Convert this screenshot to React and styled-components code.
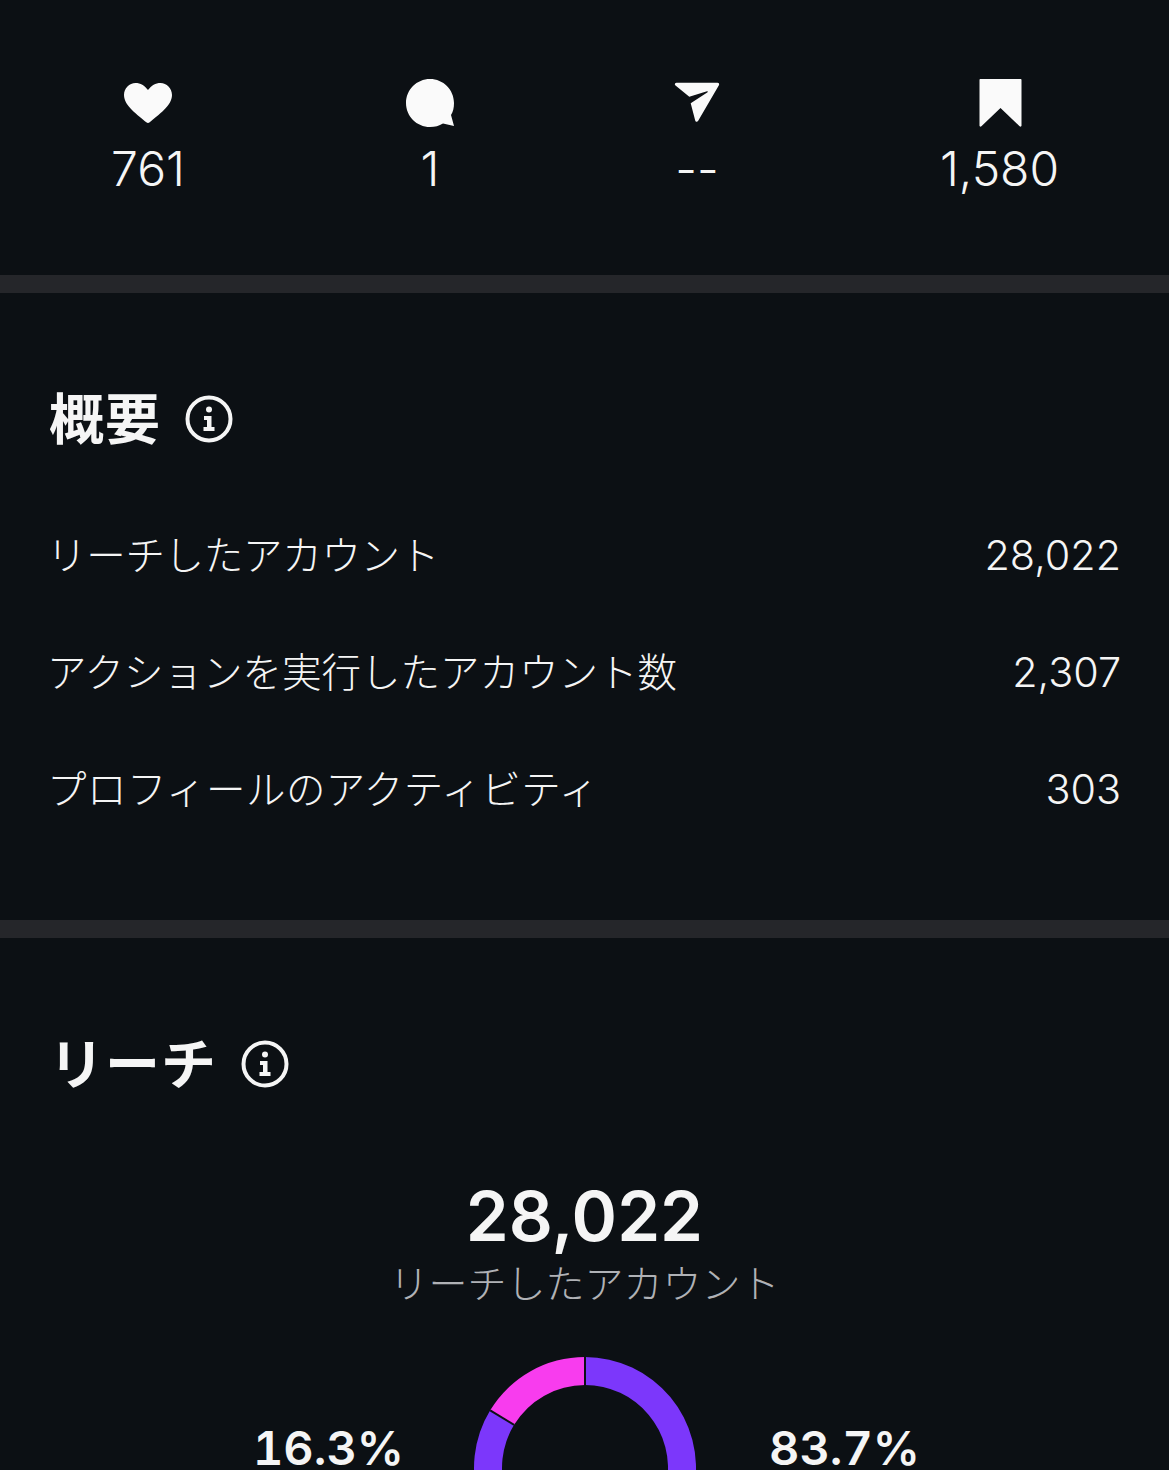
import React from 'react';
import styled, { createGlobalStyle } from 'styled-components';

const GlobalStyle = createGlobalStyle`
  html, body {
    margin: 0;
    padding: 0;
    background: #0c1014;
  }
  body {
    font-family: Inter, "Noto Sans CJK JP", sans-serif;
    color: #f5f5f5;
  }
`;

const Page = styled.div`
  width: 1169px;
  height: 1470px;
  overflow: hidden;
  background: #0c1014;
`;

const StatsBar = styled.div`
  display: grid;
  grid-template-columns: 296px 268px 266px 339px;
  height: 275px;
  padding-top: 78px;
  box-sizing: border-box;
`;

const Stat = styled.div`
  display: flex;
  flex-direction: column;
  align-items: center;
`;

const StatIcon = styled.svg`
  width: 50px;
  height: 50px;
  fill: #fafafa;
  display: block;
`;

const StatValue = styled.div`
  font-size: 48px;
  font-weight: 350;
  line-height: 56px;
  margin-top: 13px;
`;

const Divider = styled.div`
  height: 18px;
  background: #25262a;
`;

const Section = styled.section`
  padding: ${props => props.$top}px 49px 0;
  height: ${props => props.$height}px;
  box-sizing: border-box;
`;

const Heading = styled.div`
  display: flex;
  align-items: center;
  gap: 24px;
  height: 60px;
`;

const HeadingText = styled.h2`
  margin: 0;
  font-size: 55px;
  letter-spacing: 1px;
  font-weight: 700;
  line-height: 60px;
`;

const InfoIcon = styled.svg`
  width: 48px;
  height: 48px;
  display: block;
`;

const Rows = styled.div`
  margin-top: 77px;
  display: flex;
  flex-direction: column;
  gap: 60px;
`;

const Row = styled.div`
  display: flex;
  justify-content: space-between;
  align-items: center;
  height: 57px;
  margin: 0 -1px 0 -2px;
`;

const RowLabel = styled.span`
  font-size: 39.5px;
  font-weight: 300;
  letter-spacing: ${props => props.$spacing}px;
  padding-bottom: 5px;
`;

const RowValue = styled.span`
  font-size: 41.3px;
  font-weight: 350;
`;

const Total = styled.div`
  margin-top: 83px;
  display: flex;
  flex-direction: column;
  align-items: center;
`;

const TotalValue = styled.div`
  font-size: 69px;
  font-weight: 600;
  line-height: 78px;
`;

const TotalLabel = styled.div`
  font-size: 39px;
  font-weight: 300;
  line-height: 58px;
  color: #b0b2b6;
`;

const Split = styled.div`
  margin: 44px -49px 0;
  display: grid;
  grid-template-columns: 474px 222px 1fr;
  align-items: start;
`;

const Percent = styled.div`
  font-size: 47px;
  font-weight: 600;
  line-height: 60px;
  margin-top: 61px;
  font-variant-numeric: tabular-nums;
  text-align: ${props => props.$align};
  padding-right: ${props => props.$pr || 0}px;
  padding-left: ${props => props.$pl || 0}px;
`;

const Donut = styled.svg`
  width: 222px;
  height: 222px;
  display: block;
`;

const HEART = 'M25 45 C24.4 45 23.8 44.7 23.3 44.3 C15 37 1 28 1 17 C1 10 6.4 5 12.5 5 C17.5 5 21.5 7.6 25 12 C28.5 7.6 32.5 5 37.5 5 C43.6 5 49 10 49 17 C49 28 35 37 26.7 44.3 C26.2 44.7 25.6 45 25 45 Z';
const BUBBLE = 'M25 1 C38.3 1 49 11.7 49 25 C49 30 48 34 46 37 L49 48 L38 45.5 C34 48 30 49 25 49 C11.7 49 1 38.3 1 25 C1 11.7 11.7 1 25 1 Z';
const SEND = 'M4.5 4.7 H45.5 C47 4.7 47.6 6 46.9 7.2 L26.2 42.8 C25.4 44.2 23.6 44.2 23.2 42.6 L18.7 25.3 L35.6 14.2 C36 13.7 35.6 13.1 35 13.3 L17.3 18.7 L3.5 7.6 C2.2 6.5 3 4.7 4.5 4.7 Z';
const BOOKMARK = 'M5.5 1 H45.5 C46.1 1 46.5 1.4 46.5 2 V47.5 C46.5 48.7 45.4 49 44.6 48.3 L25.5 30 L6.4 48.3 C5.6 49 4.5 48.7 4.5 47.5 V2 C4.5 1.4 4.9 1 5.5 1 Z';

const stats = [
  { path: HEART, value: '761' },
  { path: BUBBLE, value: '1' },
  { path: SEND, value: '--' },
  { path: BOOKMARK, value: '1,580' },
];

const rows = [
  { label: 'リーチしたアカウント', value: '28,022', spacing: -0.3 },
  { label: 'アクションを実行したアカウント数', value: '2,307', spacing: 0 },
  { label: 'プロフィールのアクティビティ', value: '303', spacing: 0.45 },
];

function Info() {
  return (
    <InfoIcon viewBox="0 0 48 48">
      <circle cx="24" cy="24" r="21.5" fill="none" stroke="#f5f5f5" strokeWidth="4" />
      <circle cx="24" cy="14.5" r="3" fill="#f5f5f5" />
      <path d="M19 21 H26.5 V32 H29.5 V36 H18.5 V32 H22 V25 H19 Z" fill="#f5f5f5" />
    </InfoIcon>
  );
}

function arc(from, to, r0, r1) {
  const pt = (deg, r) => {
    const a = (deg * Math.PI) / 180;
    return `${(111 + r * Math.sin(a)).toFixed(2)} ${(111 - r * Math.cos(a)).toFixed(2)}`;
  };
  const large = to - from > 180 ? 1 : 0;
  return `M${pt(from, r1)} A${r1} ${r1} 0 ${large} 1 ${pt(to, r1)} L${pt(to, r0)} A${r0} ${r0} 0 ${large} 0 ${pt(from, r0)} Z`;
}

function Ring() {
  const split = 360 * 0.837;
  return (
    <Donut viewBox="0 0 222 222">
      <path d={arc(0, split, 83, 111)} fill="#7c37fb" />
      <path d={arc(split, 360, 83, 111)} fill="#f83cee" />
      <line x1="111" y1="0" x2="111" y2="28" stroke="#0c1014" strokeWidth="2" />
      <line x1="16.2" y1="53.3" x2="40.1" y2="67.9" stroke="#0c1014" strokeWidth="2" />
    </Donut>
  );
}

export default function App() {
  return (
    <Page>
      <GlobalStyle />
      <StatsBar>
        {stats.map(stat => (
          <Stat key={stat.value}>
            <StatIcon viewBox="0 0 50 50"><path d={stat.path} /></StatIcon>
            <StatValue>{stat.value}</StatValue>
          </Stat>
        ))}
      </StatsBar>
      <Divider />
      <Section $top={96} $height={627}>
        <Heading>
          <HeadingText>概要</HeadingText>
          <Info />
        </Heading>
        <Rows>
          {rows.map(row => (
            <Row key={row.label}>
              <RowLabel $spacing={row.spacing}>{row.label}</RowLabel>
              <RowValue>{row.value}</RowValue>
            </Row>
          ))}
        </Rows>
      </Section>
      <Divider />
      <Section $top={96} $height={532}>
        <Heading>
          <HeadingText>リーチ</HeadingText>
          <Info />
        </Heading>
        <Total>
          <TotalValue>28,022</TotalValue>
          <TotalLabel>リーチしたアカウント</TotalLabel>
        </Total>
        <Split>
          <Percent $align="right" $pr={70}>16.3%</Percent>
          <Ring />
          <Percent $align="left" $pl={73}>83.7%</Percent>
        </Split>
      </Section>
    </Page>
  );
}
